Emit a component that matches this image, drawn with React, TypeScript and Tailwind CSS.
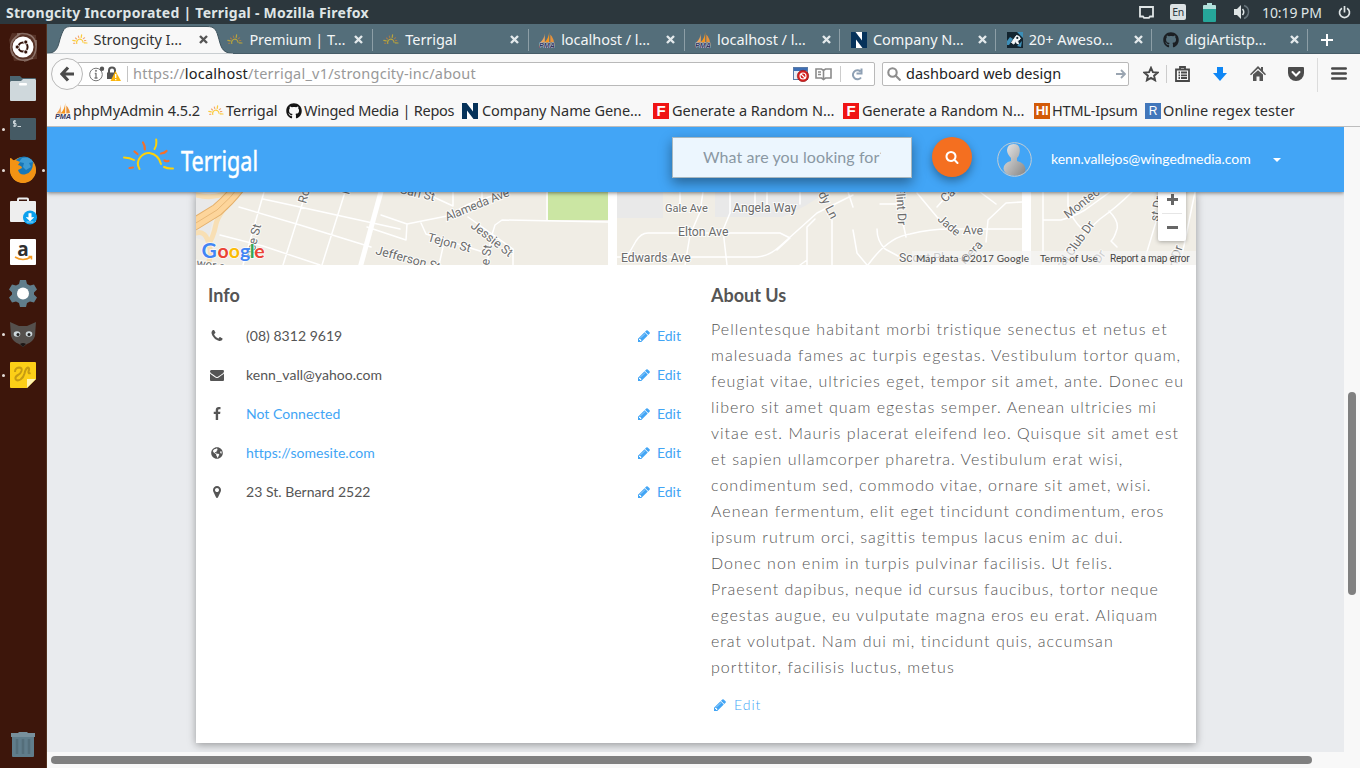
import type { ReactNode } from "react";
import { FaGithub, FaGlobeAmericas } from "react-icons/fa";

const PENCIL =
  "M491 1536l91-91-235-235-91 91v107h128v128h107zm523-928q0-22-22-22-10 0-17 7l-542 542q-7 7-7 17 0 22 22 22 10 0 17-7l542-542q7-7 7-17zm-54-192l416 416-832 832h-416v-416zm683 96q0 53-37 90l-166 166-416-416 166-165q36-38 90-38 53 0 91 38l235 234q37 39 37 91z";
const FACEBOOK =
  "M1343 12v264h-157q-86 0-116 36t-30 108v189h293l-39 296h-254v759h-306v-759h-255v-296h255v-218q0-186 104-288.500t277-102.500q147 0 228 12z";
const ENVELOPE =
  "M1792 710v794q0 66-47 113t-113 47h-1472q-66 0-113-47t-47-113v-794q44 49 101 87 362 246 497 345 57 42 92.500 65.500t94.500 48 110 24.500h2q51 0 110-24.500t94.500-48 92.500-65.500q170-123 498-345 57-39 100-87zm0-294q0 79-49 151t-122 123q-376 261-468 325-10 7-42.500 31t-54 38.500-52 32.500-57.500 27-50 9h-2q-23 0-50-9t-57.500-27-52-32.500-54-38.500-42.500-31q-91-64-262-182.500t-205-142.500q-62-42-117-115.500t-55-136.500q0-78 41.500-130t118.500-52h1472q65 0 112.500 47t47.500 113z";
const MARKER =
  "M1152 640q0-106-75-181t-181-75-181 75-75 181 75 181 181 75 181-75 75-181zm256 0q0 109-33 179l-364 774q-16 33-47.500 52t-67.500 19-67.500-19-46.500-52l-365-774q-33-70-33-179 0-212 150-362t362-150 362 150 150 362z";
const PHONE =
  "M1600 1240q0 27-10 70.500t-21 68.500q-21 50-122 106-94 51-186 51-27 0-53-3.500t-57.500-12.500-47-14.500-55.500-20.500-49-18q-98-35-175-83-127-79-264-216t-216-264q-48-77-83-175-3-9-18-49t-20.500-55.500-14.500-47-12.500-57.500-3.500-53q0-92 51-186 56-101 106-122 25-11 68.500-21t70.500-10q14 0 21 3 18 6 53 76 11 19 30 54t35 63.500 31 53.500q3 4 17.500 25t21.500 35.500 7 28.500q0 20-28.500 50t-62 55-62 53-28.500 46q0 9 5 22.500t8.500 20.500 14 24 11.500 19q76 137 174 235t235 174q2 1 19 11.500t24 14 20.500 8.500 22.500 5q18 0 46-28.500t53-62 55-62 50-28.500q14 0 28.500 7t35.500 21.500 25 17.500q25 15 53.500 31t63.500 35 54 30q70 35 76 53 3 7 3 21z";
const SEARCH =
  "M1216 832q0-185-131.500-316.500t-316.500-131.500-316.500 131.500-131.500 316.500 131.500 316.500 316.500 131.500 316.500-131.500 131.500-316.500zm512 832q0 52-38 90t-90 38q-54 0-90-38l-343-342q-179 124-399 124-143 0-273.500-55.500t-225-150-150-225-55.500-273.500 55.500-273.500 150-225 225-150 273.500-55.500 273.500 55.500 225 150 150 225 55.500 273.500q0 220-124 399l343 343q37 37 37 90z";

function Glyph({ d, size = 14 }: { d: string; size?: number }) {
  return (
    <svg width={size} height={size} viewBox="0 0 1792 1792" fill="currentColor" className="shrink-0">
      <path d={d} />
    </svg>
  );
}

/* ---------- favicons ---------- */

function SunIcon({ dim = false }: { dim?: boolean }) {
  return (
    <svg width="16" height="16" viewBox="0 0 16 16" fill="none" strokeLinecap="round" className="shrink-0">
      <g stroke={dim ? "#b9a53c" : "#fbcb3a"} strokeWidth="1.200">
        <path d="M4.800 11.500a3.200 3.200 0 1 1 6.200-1.300" />
        <path d="M.8 8.400l2.500.5M9.600 2.800l-.4 2.500M12.200 10.800l2.800.2" />
      </g>
      <g stroke={dim ? "#a67a4a" : "#f5a56b"} strokeWidth="1.100">
        <path d="M6.300 4l.5 1.600M3.500 6l1 1M12.600 5.800l-1.300.8M13.800 8.500l-1.300.1M1.700 11.400l1.200-.2" />
      </g>
    </svg>
  );
}

function PmaIcon({ light = false }: { light?: boolean }) {
  return (
    <svg width="16" height="16" viewBox="0 0 16 16" className="shrink-0">
      <path d="M5.800 1.500C5.800 5 3.500 8.500 1.200 10.500h4.600z" fill="#f0a45a" />
      <path d="M10.200 0v10.500H5.500C8.500 7.500 9.800 4 10.200 0z" fill="#f8951d" />
      <path d="M11.300 2.500c2 2.200 3.400 5 3.600 7.500l-3.600.5z" fill="#e8923a" />
      <text
        x="0"
        y="15.700"
        fontFamily="Liberation Sans"
        fontSize="6.500"
        fontWeight="bold"
        fontStyle="italic"
        textLength="16"
        lengthAdjust="spacingAndGlyphs"
        fill="#34365f"
        stroke={light ? "#c9cbd8" : "none"}
        strokeWidth=".9"
        paintOrder="stroke"
      >
        PMA
      </text>
    </svg>
  );
}

function NameIcon() {
  return (
    <svg width="16" height="16" viewBox="0 0 16 16" className="shrink-0">
      <rect width="16" height="16" fill="#fff" />
      <path d="M0 0h4.500L11 8.500V0h5v16h-4.500L5 7.500V16H0z" fill="#06325a" />
    </svg>
  );
}

function RocketIcon() {
  return (
    <svg width="16" height="16" viewBox="0 0 16 16" className="shrink-0">
      <rect width="16" height="16" fill="#12242f" />
      <path d="M0 9l3-4 3 2-4 6H0zM10 0h6v6zM10 14l5-5-1 6z" fill="#3d8fb8" />
      <path d="M4.500 10.500L9.500 3.500q3.500.5 3.800 3-.8 2-2.800 1.900l1 3.600-2.200-1-.6-2.500-1.800 3.600z" fill="#f5f8fa" stroke="#f5f8fa" />
      <circle cx="10.300" cy="5.900" r="1.100" fill="#12242f" />
    </svg>
  );
}

function LetterIcon({ tone, children }: { tone: "red" | "orange" | "blue"; children: ReactNode }) {
  const tones = {
    red: "bg-[#f01414] text-[15px] font-bold",
    orange: "bg-[#d35a08] text-[13px] font-bold",
    blue: "bg-[#4277bb] text-[12px]",
  };
  return (
    <span
      className={`flex size-4 shrink-0 items-center justify-center font-['Liberation_Sans',sans-serif] leading-none text-white ${tones[tone]}`}
    >
      {children}
    </span>
  );
}

/* ---------- desktop ---------- */

function TitleBar() {
  return (
    <header className="flex h-6 shrink-0 items-center justify-between bg-[#2c373d] pr-[9px] pl-[6px] text-[#dfe5e6]">
      <span className="text-[14px] font-bold tracking-[0.260px] whitespace-nowrap">
        Strongcity Incorporated | Terrigal - Mozilla Firefox
      </span>
      <div className="flex items-center">
        <svg width="15" height="13" viewBox="0 0 15 13" fill="none" stroke="#dfe5e6" strokeWidth="1.800">
          <path d="M1 1h13v9.500h-3l-1 1.300H5l-1-1.300H1z" />
        </svg>
        <span className="ml-4 flex h-4 w-4 items-center justify-center rounded-[2px] bg-[#dce2e4] text-[10.500px] leading-none tracking-[-0.3px] text-[#2c373d]">
          En
        </span>
        <svg width="13" height="19" viewBox="0 0 13 19" className="ml-[17px]">
          <path d="M4 0h5v2h3a1 1 0 0 1 1 1v4H0V3a1 1 0 0 1 1-1h3z" fill="#b2dfdb" />
          <path d="M0 6h13v12a1 1 0 0 1-1 1H1a1 1 0 0 1-1-1z" fill="#26a69a" />
        </svg>
        <svg width="16" height="16" viewBox="0 0 16 16" className="ml-[18px]" fill="none">
          <path d="M0 5h3l4-4v14l-4-4H0z" fill="#dfe5e6" />
          <path d="M8.500 5q2.500 3 0 6" stroke="#dfe5e6" strokeWidth="1.500" />
          <path d="M10 1.500q5.500 2 4.300 8-1 4-4.300 5" stroke="#66737a" strokeWidth="1.500" />
        </svg>
        <span className="ml-[12px] w-[62px] text-[14px] tracking-[-0.1px] whitespace-nowrap">10:19 PM</span>
        <svg width="13" height="13" viewBox="0 0 13 13" className="ml-[14px]" fill="none" stroke="#dfe5e6" strokeWidth="1.700">
          <path d="M4 2.200a5 5 0 1 0 5 0M6.500 0v6.500" />
        </svg>
      </div>
    </header>
  );
}

function Dot({ on }: { on?: boolean }) {
  return <span className={`size-[3px] rounded-full ${on ? "bg-[#e4dcd8]" : ""}`} />;
}

const launcher: { left?: boolean; right?: boolean; art: ReactNode }[] = [
  {
    art: (
      <>
        <path d="M4 1l24 2 1 24-23 2L1 8z" fill="#6d4a3e" opacity=".55" />
        <path d="M5 24Q-2 10 12 2M9 2q18-3 19 12M28 8q2 20-12 21M25 26Q8 33 3 18" fill="none" stroke="#a28d84" strokeWidth="1.500" opacity=".7" />
        <circle cx="15" cy="15" r="10.500" fill="#fff" />
        <circle cx="15" cy="15" r="4.600" fill="none" stroke="#33130a" strokeWidth="2" />
        <g fill="#33130a" stroke="#fff" strokeWidth=".9">
          <circle cx="9.200" cy="15" r="2.100" />
          <circle cx="17.800" cy="10" r="2.100" />
          <circle cx="17.800" cy="20" r="2.100" />
        </g>
      </>
    ),
  },
  {
    art: (
      <>
        <path d="M2 3h10l2 2h13a1 1 0 0 1 1 1v7H2z" fill="#4c6570" />
        <path d="M3 8h10l2-2h12l1 1v20a1 1 0 0 1-1 1H3a1 1 0 0 1-1-1V9z" fill="#cfd8dc" />
        <rect x="11" y="10" width="8" height="2.500" rx="1" fill="#fff" />
      </>
    ),
  },
  {
    left: true,
    art: (
      <>
        <rect x="2" y="4" width="26" height="22" rx="1" fill="#455a64" />
        <path d="M8 7H5.500v2.500H8V12H5M6.700 6v7M9.500 12.500h3.500" stroke="#cfd8dc" strokeWidth="1" fill="none" />
      </>
    ),
  },
  {
    left: true,
    right: true,
    art: (
      <>
        <circle cx="15" cy="15" r="13" fill="#f39c1f" />
        <circle cx="16" cy="12" r="10.500" fill="#1778b8" />
        <path d="M14 3q8-2 11 4l-4 1 2 4-5 3-3-3 1-4-5-1z" fill="#3d9bd4" />
        <path d="M2 3q2 0 3 2 4 0 7 2l-2 3q4 1 4 3l-4 2q2 6 8 4 7-2 7-12 5 8 1 14-5 7-12 7Q3 26 2 15z" fill="#f39314" />
      </>
    ),
  },
  {
    art: (
      <>
        <path d="M10 7V3.500q0-1 1-1h8q1 0 1 1V7" fill="none" stroke="#eceff1" strokeWidth="2" />
        <rect x="2" y="5" width="26" height="21" rx="1" fill="#eee" />
        <circle cx="22" cy="21.500" r="7" fill="#0aa0ee" />
        <path d="M20.800 17.500h2.400v4h2.500L22 25l-3.700-3.500h2.500zM18.500 26h7" fill="#fff" stroke="#fff" strokeWidth=".6" />
      </>
    ),
  },
  {
    art: (
      <>
        <rect x="2" y="2" width="26" height="26" rx="1" fill="#fff" />
        <text x="15" y="19" textAnchor="middle" fontFamily="Open Sans" fontWeight="bold" fontSize="19" fill="#2f2f2f">
          a
        </text>
        <path d="M7 20q8 5 16 0M20.500 19.500h3v3" fill="none" stroke="#f59b23" strokeWidth="1.500" />
      </>
    ),
  },
  {
    art: (
      <>
        <path
          d="M12 2h6l1 4 3 1.500 4-1 3 5-3 3v2l3 3-3 5-4-1L19 25l-1 4h-6l-1-4-3-1.500-4 1-3-5 3-3v-2l-3-3 3-5 4 1L11 6z"
          fill="#607d8b"
        />
        <circle cx="15" cy="15.500" r="6" fill="#fff" />
      </>
    ),
  },
  {
    left: true,
    art: (
      <>
        <path d="M2 3l9 4h8l9-4-1 14q-2 6-8 8l-4 3-4-3q-6-2-8-8z" fill="#55504d" />
        <ellipse cx="9" cy="15" rx="3.300" ry="2.800" fill="#cfd8dc" />
        <ellipse cx="21" cy="15" rx="3.300" ry="2.800" fill="#cfd8dc" />
        <circle cx="10" cy="15.500" r="1.500" fill="#222" />
        <circle cx="21" cy="15.500" r="1.500" fill="#222" />
        <path d="M12 25q3-2 6 0l-3 3z" fill="#1d1716" />
      </>
    ),
  },
  {
    left: true,
    art: (
      <>
        <path d="M3 2h24a1 1 0 0 1 1 1v16l-9 9H3a1 1 0 0 1-1-1V3a1 1 0 0 1 1-1z" fill="#fccf17" />
        <path d="M19 28v-9h9z" fill="#fff3b0" />
        <path
          d="M7 12q0-4 4-4.500 3.500 0 2.500 3.500-1 3-3.500 4-3 1.500-2.500 4 1.500 2.500 5 .5 3-2 4-6 1-5 3.500-6 2 .5.500 4-.5 2.500 2 1.500"
          fill="none"
          stroke="#c69b13"
          strokeWidth="2"
        />
      </>
    ),
  },
];

function Launcher() {
  return (
    <aside className="flex w-[47px] shrink-0 flex-col justify-between border-r border-[#52301f] bg-[#3d160b] pt-[8px] pb-[8px]">
      <div className="flex flex-col gap-[11px]">
        {launcher.map((item, i) => (
          <div key={i} className="flex h-[30px] items-center">
            <span className="flex w-[8px] justify-center pr-[2px]">
              <Dot on={item.left} />
            </span>
            <svg width="30" height="30" viewBox="0 0 30 30">
              {item.art}
            </svg>
            <span className="flex w-[7px] justify-end">
              <Dot on={item.right} />
            </span>
          </div>
        ))}
      </div>
      <svg width="26" height="30" viewBox="0 0 26 30" className="ml-[10px]">
        <path d="M2 6h22v20a1 1 0 0 1-1 1H3a1 1 0 0 1-1-1z" fill="#607d8b" />
        <path d="M1 3h7l1-1h8l1 1h7v4H1z" fill="#78909c" />
        <path d="M7 9v15M13 9v15M19 9v15" stroke="#546e7a" strokeWidth="2.500" />
      </svg>
    </aside>
  );
}

/* ---------- browser chrome ---------- */

const tabs: { icon: ReactNode; title: string }[] = [
  { icon: <SunIcon />, title: "Strongcity I…" },
  { icon: <SunIcon dim />, title: "Premium | T…" },
  { icon: <SunIcon dim />, title: "Terrigal" },
  { icon: <PmaIcon light />, title: "localhost / l…" },
  { icon: <PmaIcon light />, title: "localhost / l…" },
  { icon: <NameIcon />, title: "Company N…" },
  { icon: <RocketIcon />, title: "20+ Aweso…" },
  { icon: <FaGithub size={16} color="#1b1f23" className="shrink-0" />, title: "digiArtistp…" },
];

function TabStrip() {
  return (
    <div className="relative flex h-[30px] shrink-0 border-b border-[#465c67] bg-[#546e7a] pl-[14px]">
      <svg width="186" height="30" viewBox="0 0 186 30" className="absolute top-0 left-0">
        <path
          d="M0 29.500C12 29 11 20 14 12 17 4 18 2.500 25 2.500H160C167 2.500 169 5 171 12 174 22 174 29 186 29.500V30H0z"
          fill="#f8f8f8"
          stroke="#3f535d"
          strokeWidth="1"
        />
        <path d="M0 29.500h186V30H0z" fill="#f8f8f8" />
      </svg>
      {tabs.map((tab, i) => (
        <div
          key={i}
          className={`relative flex w-[155.900px] shrink-0 items-center pt-[2px] pl-[10.500px] ${i === 0 ? "text-[#333]" : "text-[#f3f6f7]"}`}
        >
          {tab.icon}
          <span className="ml-[6px] w-[102px] text-[14.500px] tracking-[-0.050px] whitespace-nowrap">{tab.title}</span>
          <svg width="9" height="9" viewBox="0 0 9 9" className="ml-[3px]" stroke={i === 0 ? "#555" : "#e3e9eb"} strokeWidth="2.400">
            <path d="M1 1l7 7M8 1L1 8" />
          </svg>
          {i > 0 && <span className="ml-auto h-[22px] w-px bg-[#8d9fa7]" />}
        </div>
      ))}
      <svg width="12" height="12" viewBox="0 0 12 12" className="mt-[10px] ml-[12.500px]" stroke="#fff" strokeWidth="2">
        <path d="M6 0v12M0 6h12" />
      </svg>
    </div>
  );
}

function Toolbar() {
  return (
    <div className="flex h-[41px] shrink-0 items-center bg-[#f8f8f8] pl-[4px]">
      <span className="relative z-10 mb-[2px] flex size-8 shrink-0 items-center justify-center rounded-full border border-[#b9b9b9] bg-[#fbfbfb]">
        <svg width="14" height="16" viewBox="0 0 14 16" fill="none" stroke="#4b4b4b" strokeWidth="3.200">
          <path d="M8 1.500L2 8l6 6.500M2 8h12" />
        </svg>
      </span>
      <div className="mb-px -ml-[6px] flex h-6 w-[798px] items-center rounded-[2px] border border-[#b9b9b9] bg-white pl-[11px]">
        <svg width="16" height="16" viewBox="0 0 16 16" fill="none" stroke="#777">
          <circle cx="7" cy="8.500" r="6.300" />
          <path d="M7 7v5M5.800 7.500h1.500M5.500 12h3" strokeWidth="1.300" />
          <circle cx="7" cy="4.800" r=".6" fill="#666" />
          <circle cx="13" cy="2.800" r="2.200" fill="#555" stroke="none" />
        </svg>
        <svg width="15" height="16" viewBox="0 0 15 16" className="ml-[1px]">
          <path d="M3 7V4.500a3 3 0 0 1 6 0V7" fill="none" stroke="#555" strokeWidth="2" />
          <rect x="1" y="6.500" width="9" height="6.500" fill="#555" />
          <path d="M9.500 5L15 15H4.500z" fill="#fbb50b" />
          <path d="M9.700 8v4M9.700 13v1.300" stroke="#fff" strokeWidth="1.300" />
        </svg>
        <span className="ml-[6px] h-[16px] w-px bg-[#c4c4c4]" />
        <span className="ml-[5px] text-[14.500px] tracking-[0.225px] whitespace-nowrap text-[#999]">
          https://<span className="text-[#222]">localhost</span>/terrigal_v1/strongcity-inc/about
        </span>
        <div className="ml-auto flex items-center pr-[11px]">
          <svg width="17" height="16" viewBox="0 0 17 16">
            <rect x=".5" y="1.500" width="14" height="12" fill="#e8eef5" stroke="#5a7ba8" />
            <path d="M1 2h13v3H1z" fill="#3d6fb5" />
            <circle cx="10" cy="10" r="5.700" fill="#d41f1f" stroke="#8c1010" strokeWidth=".6" />
            <circle cx="10" cy="10" r="3" fill="none" stroke="#fff" strokeWidth="1.100" />
            <path d="M8 8l4 4" stroke="#fff" strokeWidth="1.100" />
          </svg>
          <svg width="17" height="14" viewBox="0 0 17 14" className="ml-[5px]" fill="none" stroke="#8b8b8b" strokeWidth="1.600">
            <path d="M1 2h5.500l2 1.500 2-1.500H16v9h-5.500l-2 1.500-2-1.500H1zM8.500 3.500V12M3 5h3M3 7.500h3" />
          </svg>
          <span className="ml-[8px] h-4 w-px bg-[#ccc]" />
          <svg width="12" height="13" viewBox="0 0 12 13" className="ml-[10px]" fill="none" stroke="#8ea0b4" strokeWidth="2">
            <path d="M9.500 3.500A4.500 4.500 0 1 0 10 9.500M10.500.5v5h-5" />
          </svg>
        </div>
      </div>
      <div className="mb-px ml-[7px] flex h-6 w-[247px] items-center rounded-[2px] border border-[#b9b9b9] bg-white pr-[2px] pl-[4px]">
        <svg width="14" height="14" viewBox="0 0 14 14" fill="none" stroke="#8e8e8e" strokeWidth="2.100">
          <circle cx="5.500" cy="5.500" r="4.200" />
          <path d="M8.500 8.500l5 5" />
        </svg>
        <span className="ml-[5px] text-[14.500px] tracking-[0px] whitespace-nowrap text-[#222]">dashboard web design</span>
        <svg width="10" height="10" viewBox="0 0 10 10" className="ml-auto" fill="none" stroke="#9aa5b1" strokeWidth="1.800">
          <path d="M0 5h9M5 1l4 4-4 4" />
        </svg>
      </div>
      <svg width="16" height="16" viewBox="0 0 16 16" className="mb-px ml-[14px] shrink-0" fill="none" stroke="#484848" strokeWidth="1.900">
        <path d="M8 1.800l1.900 4.300 4.700.5-3.500 3.100 1 4.600L8 11.900l-4.100 2.400 1-4.600L1.400 6.600l4.700-.5z" />
      </svg>
      <span className="mb-px ml-[7px] h-[18px] w-px bg-[#ccc]" />
      <svg width="15" height="16" viewBox="0 0 15 16" className="mb-[2px] ml-[8px]" fill="none" stroke="#484848" strokeWidth="1.800">
        <path d="M1 3.500h13v11.500H1zM3.500 6.500h1.500M6 6.500h6M3.500 9.300h1.500M6 9.300h6M3.500 12h1.500M6 12h6" />
        <path d="M5 3V1h5v2" />
      </svg>
      <svg width="14" height="14" viewBox="0 0 14 14" className="mb-[2px] ml-[23px]" fill="#0f87f5">
        <path d="M4 0h6v6h4l-7 8-7-8h4z" />
      </svg>
      <svg width="16" height="15" viewBox="0 0 16 15" className="mb-[2px] ml-[23px]" fill="#555">
        <path d="M8 0l3 3V1h2v4l3 3.200-1 1L8 2.500 1 9.200l-1-1z" />
        <path d="M3 8.500l5-4.300 5 4.300V15H9.500v-4.500h-3V15H3z" />
      </svg>
      <svg width="16" height="14" viewBox="0 0 16 14" className="mb-[2px] ml-[22px]">
        <path d="M1 0h14a1 1 0 0 1 1 1v5a8 8 0 0 1-16 0V1a1 1 0 0 1 1-1z" fill="#4c4c4c" />
        <path d="M4.500 5l3.500 3.500L11.500 5" fill="none" stroke="#fff" strokeWidth="2" strokeLinecap="round" />
      </svg>
      <span className="ml-[13px] h-[34px] w-px bg-[#dcdcdc]" />
      <svg width="16" height="13" viewBox="0 0 16 13" className="mb-[2px] ml-[13px]" stroke="#484848" strokeWidth="2.600" strokeLinecap="round">
        <path d="M1.300 1.500h13.400M1.300 6.500h13.400M1.300 11.500h13.400" />
      </svg>
    </div>
  );
}

const bookmarks: { icon: ReactNode; title: string; box: string }[] = [
  { icon: <PmaIcon />, title: "phpMyAdmin 4.5.2", box: "w-[153px] gap-[2px] tracking-[-0.080px]" },
  { icon: <SunIcon />, title: "Terrigal", box: "w-[78px] gap-[2px] tracking-[-0.020px]" },
  { icon: <FaGithub size={16} color="#141414" className="shrink-0" />, title: "Winged Media | Repos", box: "w-[176px] gap-[2px] tracking-[-0.260px]" },
  { icon: <NameIcon />, title: "Company Name Gene…", box: "w-[191px] gap-[4px] tracking-[-0.070px]" },
  { icon: <LetterIcon tone="red">F</LetterIcon>, title: "Generate a Random N…", box: "w-[190px] gap-[3px] tracking-[0px]" },
  { icon: <LetterIcon tone="red">F</LetterIcon>, title: "Generate a Random N…", box: "w-[191px] gap-[3px] tracking-[0px]" },
  { icon: <LetterIcon tone="orange">HI</LetterIcon>, title: "HTML-Ipsum", box: "w-[111px] gap-[2px] tracking-[-0.200px]" },
  { icon: <LetterIcon tone="blue">R</LetterIcon>, title: "Online regex tester", box: "w-[160px] gap-[2px] tracking-[0.060px]" },
];

function BookmarkBar() {
  return (
    <nav className="flex h-[32px] shrink-0 items-center border-b border-[#bdbdbd] bg-[#f8f8f8] pl-[8px] text-[#2e2e2e]">
      {bookmarks.map((b, i) => (
        <div key={i} className={`flex shrink-0 items-center ${b.box}`}>
          {b.icon}
          <span className="text-[14.500px] whitespace-nowrap">{b.title}</span>
        </div>
      ))}
    </nav>
  );
}

/* ---------- page ---------- */

function Logo() {
  return (
    <svg width="140" height="50" viewBox="0 0 140 50" fill="none" strokeLinecap="round">
      <g stroke="#fdd20a" strokeWidth="2">
        <path d="M17.500 35C12 25 22 18.500 27.500 19q9 1.500 11.500 11" />
        <path d="M2 23.500q6 .2 10 2.500M32.500 15q2.500-4 1.700-9.500M42 33q4 2 9 1.500" />
      </g>
      <g stroke="#f4702a" strokeWidth="2.200">
        <path d="M21 8.500q2 3 1.800 7M12.500 17.500l3 2.500M39 19.500q4-.5 5.500-2.500M42.500 26.500q2 1.200 4 .5M7.500 34l3.500-.5" />
      </g>
      <text
        x="59"
        y="36.500"
        fill="#fff"
        stroke="#fff"
        strokeWidth=".5"
        fontFamily="Noto Sans"
        fontSize="27"
        textLength="77"
        lengthAdjust="spacingAndGlyphs"
      >
        Terrigal
      </text>
    </svg>
  );
}

function SiteHeader() {
  return (
    <header className="relative z-10 flex h-[65px] shrink-0 items-center bg-[#42a5f6] pl-[75px] shadow-[0_1px_4px_rgba(0,0,0,0.5)]">
      <div className="w-[550px] pb-px">
        <Logo />
      </div>
      <div className="mb-[4px] flex h-[41px] w-[240px] shrink-0 items-center border border-[#a9b8bf] bg-[#ecf6fe] px-[30px] pb-[2px] shadow-[0_5px_12px_rgba(0,0,0,0.4)]">
        <span className="w-[178px] overflow-hidden font-['Lato',sans-serif] text-[16px] tracking-[0.090px] whitespace-nowrap text-[#8a98a3]">
          What are you looking for?
        </span>
      </div>
      <button className="mb-[5px] ml-[20px] flex size-10 shrink-0 items-center justify-center rounded-full bg-[#f46f20] pb-px text-white shadow-[0_4px_10px_rgba(0,0,0,0.35)]">
        <Glyph d={SEARCH} />
      </button>
      <svg width="36" height="36" viewBox="0 0 36 36" className="ml-[25px] shrink-0">
        <defs>
          <linearGradient id="skin" x1="0" y1="0" x2="1" y2="1">
            <stop offset="0" stopColor="#ececec" />
            <stop offset="1" stopColor="#858585" />
          </linearGradient>
        </defs>
        <path
          d="M16.500 2q6.500 0 6.300 7-.3 5-2.800 7v3q8 2 8.500 8 0 4-2.500 5.500-7 2.500-15 0-4-2-4.500-6Q7 20.500 14 19v-3q-4-4-4-8 .5-6 6.500-6z"
          fill="url(#skin)"
        />
        <circle cx="17.500" cy="17.500" r="16.800" fill="none" stroke="#c3cdd4" strokeWidth="1" />
      </svg>
      <span className="ml-[18px] w-[200px] pb-[2px] font-['Lato',sans-serif] text-[14px] tracking-[-0.030px] whitespace-nowrap text-white">
        kenn.vallejos@wingedmedia.com
      </span>
      <span className="ml-[22px] border-x-4 border-t-4 border-x-transparent border-t-white" />
    </header>
  );
}

const streets: { text: string; x: number; y: number; angle?: number; size?: number }[] = [
  { text: "Ro", x: 306, y: 204, angle: -75 },
  { text: "N", x: 349, y: 195, angle: -75 },
  { text: "nce St", x: 253, y: 258, angle: -76 },
  { text: "wer s", x: 196, y: 267, angle: 8 },
  { text: "Jefferson St", x: 375, y: 254, angle: 15 },
  { text: "Carl St", x: 399, y: 193, angle: 13 },
  { text: "Tejon St", x: 427, y: 241, angle: 15 },
  { text: "Jessie St", x: 470, y: 227, angle: 38 },
  { text: "se St", x: 488, y: 272, angle: -82 },
  { text: "Gale Ave", x: 665, y: 212, size: 11 },
  { text: "Angela Way", x: 733, y: 212 },
  { text: "Elton Ave", x: 678, y: 236 },
  { text: "Edwards Ave", x: 621, y: 262 },
  { text: "Scout Pl", x: 899, y: 262 },
  { text: "Cas", x: 945, y: 203, angle: -42 },
  { text: "Ave", x: 963, y: 234, angle: 2 },
  { text: "Jade", x: 937, y: 220, angle: 41, size: 11.500 },
  { text: "inera", x: 965, y: 265, angle: -47 },
  { text: "dy Ln", x: 818, y: 194, angle: 63 },
  { text: "Flint Dr", x: 896, y: 187, angle: 87 },
  { text: "Montec", x: 1068, y: 219, angle: -38 },
  { text: "ral Club Dr", x: 1062, y: 270, angle: -54 },
  { text: "Dr", x: 1099, y: 264, angle: -54 },
  { text: "st Dr", x: 1158, y: 222, angle: -78 },
  { text: "n Dr", x: 1176, y: 268, angle: -72 },
];

function MapStrip() {
  return (
    <div className="relative h-[73px] shrink-0 overflow-hidden">
      <svg width="1000" height="73" viewBox="196 192 1000 73" className="block">
        <rect x="196" y="192" width="1000" height="73" fill="#f0ede5" />
        <path d="M196 198h28l-6 10-22 14zM617 192h46v26h-46zM715 192h112l-22 14-22 11h-68zM196 228l18-12-5 20-4 5-9-3z" fill="#e9e9e9" />
        <rect x="548" y="192" width="60" height="28" fill="#cbe6a3" />
        <g fill="none" strokeLinecap="round" strokeLinejoin="round">
          <path d="M196 195q15 4 28-1M238 192q-20 22-22 32-3 15-8 20M196 233q10-3 13 12 3 8 0 16" stroke="#f8dfb4" strokeWidth="5" />
          <path d="M241 184q-10 14-24 26l-26 16" stroke="#e4b06c" strokeWidth="13" />
          <path d="M241 184q-10 14-24 26l-26 16" stroke="#fdd59b" strokeWidth="11" />
          <path d="M241 184q-10 14-24 26l-26 16" stroke="#e8b878" strokeWidth="1" />
          <g stroke="#fff" strokeWidth="1.500">
            <path d="M263 199l37 8 100 22M239 207l61 18 71 22M220 235l43 11 57 19M264 192l-21 73M306 192l-23 73M345 192l-23 73M381 215l26 9 40-8 22-12 40-14M407 224l-1 16-39-13M453 192v14l-26-12M468 217l45 32v16M487 265l4-27 4-13 7-5 106 2M421 223l5 11 57 18M443 247l-4 18M547 192v28M482 192v12" />
            <path d="M680 192v15M703 192l-3 20-10 23-5 30M730 192v21l-7 17 4 35M628 255l8-14q5-8 12-8h132l10 5-13 12M617 257h140q12-1 22-10l38-34 36-18M755 192v18M767 192v18M800 192v12" />
            <path d="M807 265v-38l8-8M832 220v45M800 265l7-5M848 192l5 15M853 230l4 23 10 12M868 265q20-28 42-31 20-5 40-5h73M877 229q0 12 8 20l13 7M903 223l3 14M880 204h18M917 193l20 24 13 12M937 207l13-15M986 242l2-22 18-17 16-1M1043 192v73M1043 220h18q12-3 24-10l25-18M1068 192v14q4 14 15 24M1132 192q-15 15-32 27l-35 32M1109 211q10 10 8 18-3 10-6 12l6 6M1070 247l20 18M1165 192l-22 73M1195 192l-15 73M980 192l16 12" />
          </g>
          <path d="M382 188l-22 80" stroke="#fff" strokeWidth="5" />
        </g>
        <path d="M608 192h9v73h-9zM1022 192h9v73h-9z" fill="#fff" />
        <g fontFamily="Roboto" fill="#6b6b6b" stroke="#fff" strokeWidth="2" strokeOpacity=".8" paintOrder="stroke">
          {streets.map((s) => (
            <text key={s.text + s.x} transform={`translate(${s.x} ${s.y}) rotate(${s.angle ?? 0})`} fontSize={s.size ?? 12.200}>
              {s.text}
            </text>
          ))}
          <text transform="translate(447 221) rotate(-22)" fontSize="12" textLength="68">
            Alameda Ave
          </text>
        </g>
        <g fontFamily="Lato" fontSize="19.500" fontWeight="bold" stroke="#fff" strokeWidth="1.500" strokeOpacity=".8" paintOrder="stroke">
          <text x="201.500" y="257.500" fontSize="21" fill="#4285f4">
            G
          </text>
          <text y="257.500">
            <tspan x="217.500" fill="#ea4335">
              o
            </tspan>
            <tspan x="228.700" fill="#fbbc05">
              o
            </tspan>
            <tspan x="240" fill="#4285f4">
              g
            </tspan>
            <tspan x="249.700" fill="#34a853">
              l
            </tspan>
            <tspan x="254.200" fill="#ea4335">
              e
            </tspan>
          </text>
        </g>
      </svg>
      <div className="absolute right-0 bottom-0 flex h-[14px] items-center bg-[#f5f5f5]/70 pl-[4px] text-[#444]">
        <span className="w-[124px] font-['Lato',sans-serif] text-[10px] tracking-[0.180px] whitespace-nowrap">Map data ©2017 Google</span>
        <span className="w-[70px] font-['Lato',sans-serif] text-[10px] tracking-[0.080px] whitespace-nowrap">Terms of Use</span>
        <span className="w-[86px] font-['Roboto',sans-serif] text-[10px] tracking-[-0.230px] whitespace-nowrap">Report a map error</span>
      </div>
      <div className="absolute top-[-6px] right-[10px] flex h-[55px] w-[28px] flex-col items-center rounded-[2px] bg-white pt-[8px] shadow-[0_1px_4px_rgba(0,0,0,0.3)]">
        <svg width="20" height="44" viewBox="0 0 20 44" stroke="#666" strokeWidth="3">
          <path d="M5 5.500h11M10.500 0v11M5 33.500h11" />
          <path d="M0 19.500h20" stroke="#e6e6e6" strokeWidth="1" />
        </svg>
      </div>
    </div>
  );
}

const info: { icon: ReactNode; text: string; link?: boolean }[] = [
  { icon: <Glyph d={PHONE} />, text: "(08) 8312 9619" },
  { icon: <Glyph d={ENVELOPE} />, text: "kenn_vall@yahoo.com" },
  { icon: <Glyph d={FACEBOOK} />, text: "Not Connected", link: true },
  { icon: <FaGlobeAmericas size={12} />, text: "https://somesite.com", link: true },
  { icon: <Glyph d={MARKER} />, text: "23 St. Bernard 2522" },
];

const about = [
  "Pellentesque habitant morbi tristique senectus et netus et",
  "malesuada fames ac turpis egestas. Vestibulum tortor quam,",
  "feugiat vitae, ultricies eget, tempor sit amet, ante. Donec eu",
  "libero sit amet quam egestas semper. Aenean ultricies mi",
  "vitae est. Mauris placerat eleifend leo. Quisque sit amet est",
  "et sapien ullamcorper pharetra. Vestibulum erat wisi,",
  "condimentum sed, commodo vitae, ornare sit amet, wisi.",
  "Aenean fermentum, elit eget tincidunt condimentum, eros",
  "ipsum rutrum orci, sagittis tempus lacus enim ac dui.",
  "Donec non enim in turpis pulvinar facilisis. Ut felis.",
  "Praesent dapibus, neque id cursus faucibus, tortor neque",
  "egestas augue, eu vulputate magna eros eu erat. Aliquam",
  "erat volutpat. Nam dui mi, tincidunt quis, accumsan",
  "porttitor, facilisis luctus, metus",
];

function ProfileCard() {
  return (
    <main className="ml-[149px] flex h-[551px] w-[1000px] shrink-0 flex-col bg-white font-['Lato',sans-serif] shadow-[0_2px_8px_rgba(0,0,0,0.35)]">
      <MapStrip />
      <div className="flex pl-[12px] text-[#555]">
        <section className="w-[503px] pt-[18px]">
          <h2 className="text-[18px] leading-6 font-bold">Info</h2>
          <ul className="pt-[9px]">
            {info.map((row) => (
              <li key={row.text} className="flex h-[39px] items-center text-[14px]">
                <span className="flex w-[18px] justify-center">{row.icon}</span>
                <span className={`ml-[20px] tracking-[0.030px] ${row.link ? "text-[#42a5f5]" : ""}`}>{row.text}</span>
                <span className="mr-[30px] ml-auto flex items-center gap-[6px] text-[#42a5f5]">
                  <Glyph d={PENCIL} />
                  Edit
                </span>
              </li>
            ))}
          </ul>
        </section>
        <section className="pt-[18px]">
          <h2 className="text-[18px] leading-6 font-bold">About Us</h2>
          <div className="pt-[9px] text-[16px] leading-[26px] font-light tracking-[1.020px] text-[#555]">
            {about.map((line) => (
              <p key={line} className="whitespace-nowrap">
                {line}
              </p>
            ))}
          </div>
          <div className="mt-[15px] flex items-center gap-[7px] text-[14px] leading-5 font-light tracking-[1px] text-[#42a5f5]">
            <span className="ml-[2px]">
              <Glyph d={PENCIL} />
            </span>
            Edit
          </div>
        </section>
      </div>
    </main>
  );
}

export default function App() {
  return (
    <div className="flex h-[768px] w-[1360px] flex-col overflow-hidden font-['Noto_Sans',sans-serif]">
      <TitleBar />
      <div className="flex min-h-0 flex-1">
        <Launcher />
        <div className="flex min-w-0 flex-1 flex-col bg-[#f8f8f8]">
          <TabStrip />
          <Toolbar />
          <BookmarkBar />
          <div className="flex min-h-0 flex-1">
            <div className="flex w-[1297px] flex-col overflow-hidden bg-[#e9ebee]">
              <SiteHeader />
              <ProfileCard />
            </div>
            <div className="flex flex-1 justify-center pt-[265px]">
              <div className="h-[203px] w-[8px] rounded-full bg-[#808080]" />
            </div>
          </div>
          <div className="flex h-[16px] shrink-0 items-center pl-[4px]">
            <div className="h-[8px] w-[1261px] rounded-full bg-[#808080]" />
          </div>
        </div>
      </div>
    </div>
  );
}
